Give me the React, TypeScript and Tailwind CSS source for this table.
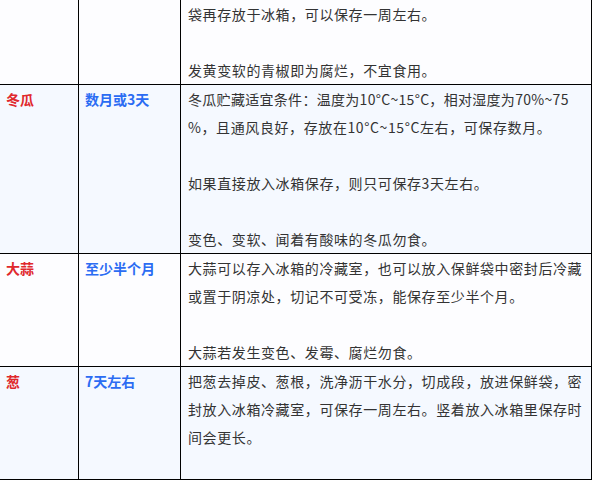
import React from "react";

interface Row {
  name: string;
  time: string;
  text: React.ReactNode;
  tint: boolean;
  extra?: boolean;
}

const rows: Row[] = [
  {
    name: "",
    time: "",
    text: "袋再存放于冰箱，可以保存一周左右。\n\n发黄变软的青椒即为腐烂，不宜食用。",
    tint: false,
  },
  {
    name: "冬瓜",
    time: "数月或3天",
    text: (
      <>
        <span className="tracking-[0.3px]">
          冬瓜贮藏适宜条件：温度为10°C~15°C，相对湿度为70%~75
        </span>
        {"\n%，且通风良好，存放在10°C~15°C左右，可保存数月。\n\n如果直接放入冰箱保存，则只可保存3天左右。\n\n变色、变软、闻着有酸味的冬瓜勿食。"}
      </>
    ),
    tint: true,
  },
  {
    name: "大蒜",
    time: "至少半个月",
    text:
      "大蒜可以存入冰箱的冷藏室，也可以放入保鲜袋中密封后冷藏或置于阴凉处，切记不可受冻，能保存至少半个月。\n\n大蒜若发生变色、发霉、腐烂勿食。",
    tint: false,
  },
  {
    name: "葱",
    time: "7天左右",
    text:
      "把葱去掉皮、葱根，洗净沥干水分，切成段，放进保鲜袋，密封放入冰箱冷藏室，可保存一周左右。竖着放入冰箱里保存时间会更长。",
    tint: true,
    extra: true,
  },
];

export default function App() {
  return (
    <div
      className="min-h-[486px] bg-white text-[14px] leading-[28px] text-[#333]"
      style={{ fontFamily: '"Noto Sans CJK SC", "Noto Sans", sans-serif' }}
    >
      <div className="w-[592px]">
        {rows.map((row, i) => (
          <div
            key={i}
            className={`flex border-b border-black ${
              row.tint ? "bg-[#f5f9ff]" : "bg-[#fdfdff]"
            }`}
          >
            <div className="w-[79px] shrink-0 border-r border-black pl-[6px] font-semibold text-[#e0282c]">
              {row.name}
            </div>
            <div className="w-[102px] shrink-0 border-r border-black pl-[6px] font-semibold text-[#2b6cf3]">
              {row.time}
            </div>
            <div
              className={`w-[411px] shrink-0 border-r border-black pl-[7px] pr-[7px] whitespace-pre-line break-all tracking-[0.6px] ${
                row.extra ? "pb-[28px]" : ""
              }`}
            >
              {row.text}
            </div>
          </div>
        ))}
      </div>
    </div>
  );
}
